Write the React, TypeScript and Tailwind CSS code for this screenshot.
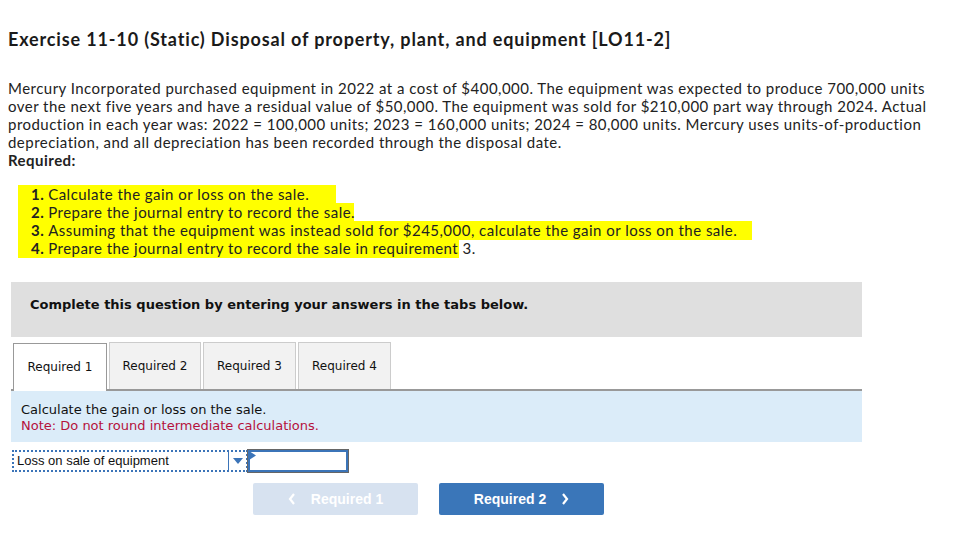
import React from "react";

function Hl({ children, w }: { children: React.ReactNode; w: string }) {
  return (
    <div className="h-[18px] flex items-center">
      <span className={`bg-[#ffff00] ${w} h-[19px] flex items-center pl-[13px] whitespace-nowrap`}>{children}</span>
    </div>
  );
}

export default function App() {
  return (
    <div className="w-[953px] h-[552px] bg-white text-[#222] overflow-hidden">
      <div className="pl-[8px] pt-[28px] font-['Lato','Liberation_Sans',sans-serif]">
        <h1 className="text-[18px] font-bold text-[#1a1a1a] leading-[22px] tracking-[0.85px]">
          Exercise 11-10 (Static) Disposal of property, plant, and equipment [LO11-2]
        </h1>
        <div className="mt-[29px] text-[15px] leading-[18px] tracking-[0.47px] text-[#222] whitespace-nowrap">
          <div>Mercury Incorporated purchased equipment in 2022 at a cost of $400,000. The equipment was expected to produce 700,000 units</div>
          <div>over the next five years and have a residual value of $50,000. The equipment was sold for $210,000 part way through 2024. Actual</div>
          <div>production in each year was: 2022 = 100,000 units; 2023 = 160,000 units; 2024 = 80,000 units. Mercury uses units-of-production</div>
          <div>depreciation, and all depreciation has been recorded through the disposal date.</div>
          <div className="font-bold">Required:</div>
        </div>
        <div className="mt-[16px] pl-[10px] text-[15px] tracking-[0.47px] text-[#222]">
          <Hl w="w-[318px]"><b className="mr-[4px]">1.</b>Calculate the gain or loss on the sale.</Hl>
          <Hl w="w-[336px]"><b className="mr-[4px]">2.</b>Prepare the journal entry to record the sale.</Hl>
          <Hl w="w-[734px]"><b className="mr-[4px]">3.</b>Assuming that the equipment was instead sold for $245,000, calculate the gain or loss on the sale.</Hl>
          <Hl w="w-[441px]"><b className="mr-[4px]">4.</b>Prepare the journal entry to record the sale in requirement 3.</Hl>
        </div>
      </div>

      <div className="ml-[11px] w-[851px] font-['DejaVu_Sans','Verdana',sans-serif]">
        <div className="mt-[25px] h-[55px] bg-[#dfdfdf] pl-[19px] pt-[15px] leading-[16px] text-[13px] font-bold text-[#111]">
          Complete this question by entering your answers in the tabs below.
        </div>
        <div className="mt-[7px] flex items-end h-[47px] border-b-[2px] border-[#999] pl-[2px]">
          <div className="w-[94px] h-[48px] -mb-[2px] pb-[2px] bg-white border border-[#999] border-b-0 flex items-center justify-center text-[12px] text-[#111]">Required 1</div>
          <div className="ml-[2px] w-[92px] h-[47px] bg-[#f2f2f2] border border-[#ccc] border-b-0 flex items-center justify-center text-[12px] text-[#111]">Required 2</div>
          <div className="ml-[2px] w-[93px] h-[47px] bg-[#f2f2f2] border border-[#ccc] border-b-0 flex items-center justify-center text-[12px] text-[#111]">Required 3</div>
          <div className="ml-[2px] w-[93px] h-[47px] bg-[#f2f2f2] border border-[#ccc] border-b-0 flex items-center justify-center text-[12px] text-[#111]">Required 4</div>
        </div>
        <div className="h-[51px] bg-[#dbecf9] pl-[10px] pt-[11px] text-[13px] leading-[16px]">
          <div className="text-[#111]">Calculate the gain or loss on the sale.</div>
          <div className="text-[#b5123c]">Note: Do not round intermediate calculations.</div>
        </div>
        <div className="mt-[8px] flex items-center">
          <div className="ml-[1px] w-[236px] h-[22px] border-2 border-dotted border-[#3b74b8] flex items-center font-['Liberation_Sans',Arial,sans-serif] text-[13px] text-[#111]">
            <span className="flex-1 pl-[3px]">Loss on sale of equipment</span>
            <span className="w-[18px] h-full border-l border-[#3b74b8] flex items-center justify-center">
              <svg width="10" height="6" viewBox="0 0 10 6"><path d="M0 0 L10 0 L5 6 Z" fill="#3b74b8" /></svg>
            </span>
          </div>
          <div className="relative w-[100px] h-[22px] border-2 border-[#3b74b8] outline outline-1 outline-[#666]">
            <svg className="absolute -left-[1px] -top-[1px]" width="7" height="9" viewBox="0 0 7 9"><path d="M0 0 L7 4.5 L0 9 Z" fill="#3b74b8" /></svg>
          </div>
        </div>
        <div className="mt-[11px] flex pl-[242px] gap-[21px] font-['Liberation_Sans',Arial,sans-serif] text-[14px] font-bold">
          <div className="w-[165px] h-[32px] rounded-[2px] bg-[#d7e2f0] text-white flex items-center justify-center gap-[15px]">
            <svg width="8" height="12" viewBox="0 0 8 12"><path d="M6 1 L2 6 L6 11" stroke="#fff" strokeWidth="2.2" fill="none" /></svg>
            <span>Required 1</span>
          </div>
          <div className="w-[165px] h-[32px] rounded-[2px] bg-[#3a76b9] text-white flex items-center justify-center gap-[15px]">
            <span>Required 2</span>
            <svg width="8" height="12" viewBox="0 0 8 12"><path d="M2 1 L6 6 L2 11" stroke="#fff" strokeWidth="2.2" fill="none" /></svg>
          </div>
        </div>
      </div>
    </div>
  );
}
